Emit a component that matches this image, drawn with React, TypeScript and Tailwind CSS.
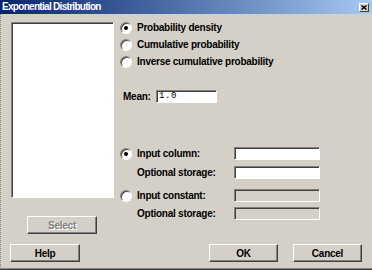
import React from "react";

const font = { fontFamily: '"Liberation Sans", Arial, sans-serif' };

function Radio({ checked }: { checked?: boolean }) {
  return (
    <div className="relative w-[12px] h-[12px] shrink-0 rounded-full bg-white border border-t-[#808080] border-l-[#808080] border-b-white border-r-white shadow-[inset_1px_1px_0_#404040]">
      {checked && <div className="absolute left-[3px] top-[3px] w-[4px] h-[4px] rounded-full bg-black" />}
    </div>
  );
}

function Field({ disabled }: { disabled?: boolean }) {
  return (
    <div
      className={`w-[86px] h-[13px] border border-t-[#808080] border-l-[#808080] border-b-white border-r-white shadow-[inset_1px_1px_0_#404040] ${
        disabled ? "bg-[#d4d0c8]" : "bg-white"
      }`}
    />
  );
}

function Button({ label, disabled, w = "w-[70px]" }: { label: string; disabled?: boolean; w?: string }) {
  return (
    <div
      className={`${w} h-[18px] flex items-center justify-center bg-[#d4d0c8] border border-t-white border-l-white border-b-[#404040] border-r-[#404040] shadow-[inset_-1px_-1px_0_#808080] text-[10px] font-bold tracking-[-0.25px] ${
        disabled ? "text-[#808080] [text-shadow:1px_1px_0_#fff]" : "text-black"
      }`}
    >
      {label}
    </div>
  );
}

export default function App() {
  return (
    <div
      style={font}
      className="w-[372px] h-[270px] flex flex-col bg-[#d4d0c8] overflow-hidden border-b border-[#404040] shadow-[inset_0_-1px_0_#808080]"
    >
      {/* title bar */}
      <div className="h-[14px] flex items-center justify-between pl-[2px] pr-[3px] bg-linear-to-r from-[#0a246a] to-[#a6caf0]">
        <span className="text-white text-[10px] font-bold tracking-[-0.7px] leading-none">
          Exponential Distribution
        </span>
        <div className="w-[10px] h-[9px] flex items-center justify-center bg-[#d4d0c8] border border-t-white border-l-white border-b-[#404040] border-r-[#404040]">
          <svg width="6" height="5" viewBox="0 0 6 5">
            <path d="M0.5 0.5 L5.5 4.5 M5.5 0.5 L0.5 4.5" stroke="#000" strokeWidth="1.4" />
          </svg>
        </div>
      </div>

      <div className="flex-1 flex flex-col pl-[9px] pr-[10px] border-l border-dotted border-[#808080]">
        <div className="flex">
          {/* left column */}
          <div className="flex flex-col pl-[1px] pt-[8px]">
            <div className="w-[103px] h-[176px] bg-white border border-t-[#808080] border-l-[#808080] border-b-white border-r-white shadow-[inset_1px_1px_0_#404040]" />
            <div className="mt-[18px] ml-[16px]">
              <Button label="Select" disabled w="w-[70px]" />
            </div>
          </div>

          {/* right column */}
          <div className="flex flex-col pl-[6px] pt-[5px] text-[10px] font-bold tracking-[-0.25px] text-black">
            <div className="h-[17px] flex items-center gap-[5px]">
              <Radio checked />
              <span>Probability density</span>
            </div>
            <div className="h-[17px] flex items-center gap-[5px]">
              <Radio />
              <span>Cumulative probability</span>
            </div>
            <div className="h-[17px] flex items-center gap-[5px]">
              <Radio />
              <span>Inverse cumulative probability</span>
            </div>

            <div className="mt-[20px] h-[13px] flex items-center">
              <span className="ml-[3px] w-[33px]">Mean:</span>
              <div
                className="w-[61px] h-[13px] pl-[2px] flex items-center bg-white border border-t-[#808080] border-l-[#808080] border-b-white border-r-white shadow-[inset_1px_1px_0_#404040] font-normal tracking-[0.6px] text-[9px]"
                style={{ fontFamily: '"Liberation Mono", monospace' }}
              >
                1.0
              </div>
            </div>

            <div className="mt-[44px] h-[13px] flex items-center">
              <Radio checked />
              <span className="ml-[5px] w-[97px]">Input column:</span>
              <Field />
            </div>
            <div className="mt-[6px] h-[13px] flex items-center">
              <div className="w-[12px]" />
              <span className="ml-[5px] w-[97px]">Optional storage:</span>
              <Field />
            </div>
            <div className="mt-[10px] h-[13px] flex items-center">
              <Radio />
              <span className="ml-[5px] w-[97px]">Input constant:</span>
              <Field disabled />
            </div>
            <div className="mt-[5px] h-[13px] flex items-center">
              <div className="w-[12px]" />
              <span className="ml-[5px] w-[97px]">Optional storage:</span>
              <Field disabled />
            </div>
          </div>
        </div>

        {/* bottom buttons */}
        <div className="mt-[10px] flex items-center justify-between">
          <Button label="Help" w="w-[70px]" />
          <div className="flex gap-[15px]">
            <Button label="OK" w="w-[69px]" />
            <Button label="Cancel" w="w-[69px]" />
          </div>
        </div>
      </div>
    </div>
  );
}
